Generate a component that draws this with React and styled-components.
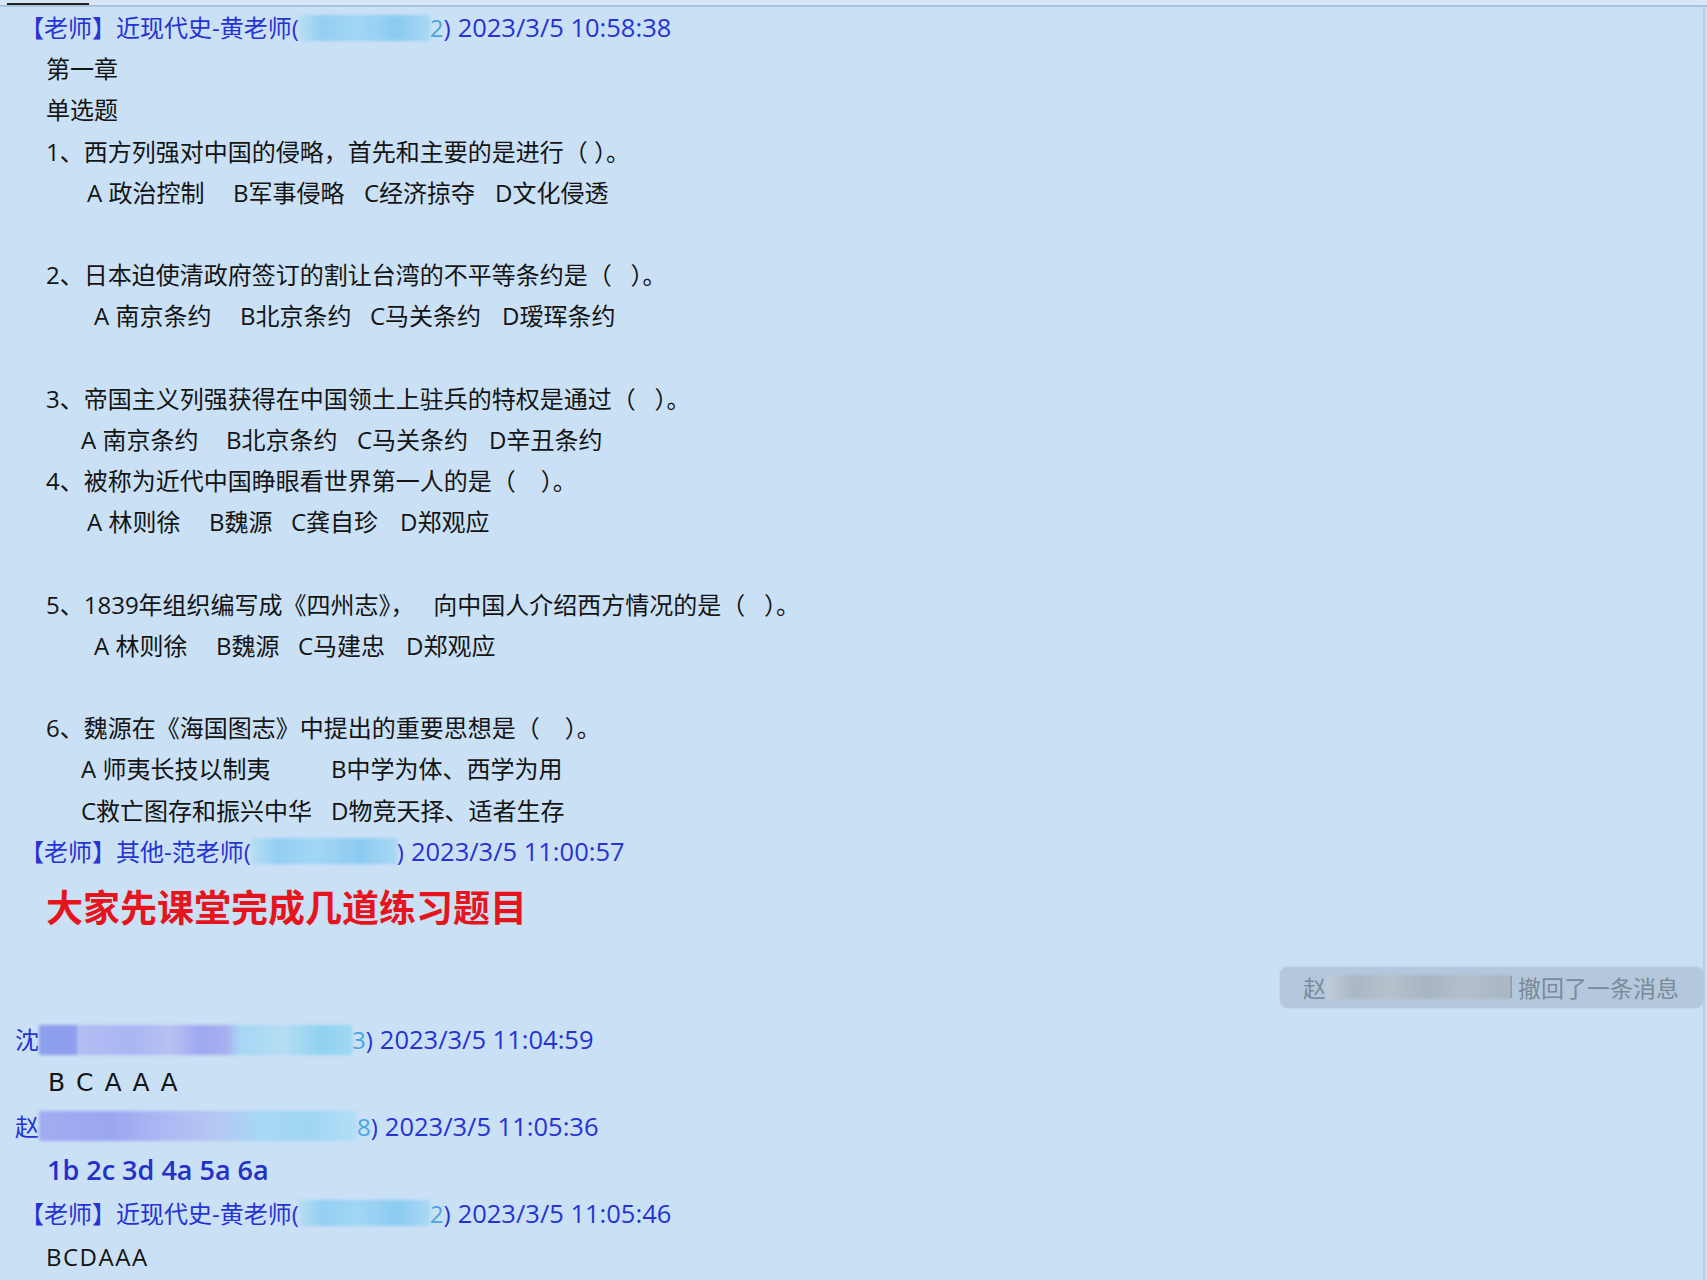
import React from "react";
import styled, { createGlobalStyle } from "styled-components";

const Global = createGlobalStyle`
  html, body { margin: 0; padding: 0; background: #c9e0f5; }
  body { font-family: "Open Sans", "Noto Sans CJK SC", sans-serif; }
`;

const Page = styled.div`
  width: 1707px;
  height: 1280px;
  background: #c9e0f5;
  display: flex;
  flex-direction: column;
  overflow: hidden;
  box-sizing: border-box;
  padding-right: 2px;
`;

const TopBar = styled.div`
  height: 5px;
  background: #d5e6f7;
  border-bottom: 2px solid #a9c2da;
  display: flex;
  align-items: flex-end;
  margin-right: -2px;
`;

const TabMark = styled.div`
  width: 82px;
  height: 2px;
  margin-left: 7px;
  background: #222;
`;

const Content = styled.div`
  flex: 1;
  display: flex;
  flex-direction: column;
  border-right: 2px solid #b6cde4;
  font-size: 24px;
  color: #141414;
`;

const Header = styled.div`
  height: ${(p) => p.$h || 41.2}px;
  line-height: ${(p) => p.$h || 41.2}px;
  padding-left: ${(p) => p.$pl ?? 20}px;
  color: #2633d2;
  white-space: pre;
  display: flex;
  align-items: center;
`;

const DateText = styled.span`
  font-size: 25.5px;
  margin-left: 7px;
`;

const Blur = styled.span`
  display: inline-block;
  width: ${(p) => p.$w}px;
  height: ${(p) => p.$h || 26}px;
  background: ${(p) => p.$bg};
  filter: blur(1.5px);
  border-radius: 2px;
`;

const Faint = styled.span`
  color: ${(p) => p.$c || "#48a6e2"};
`;

const Line = styled.div`
  height: ${(p) => p.$h || 41.2}px;
  line-height: ${(p) => p.$h || 41.2}px;
  padding-left: ${(p) => p.$pl ?? 46}px;
  letter-spacing: ${(p) => p.$ls || 0}px;
  white-space: pre;
`;

const Options = styled.div`
  height: 41.2px;
  line-height: 41.2px;
  padding-left: ${(p) => p.$pl}px;
  display: grid;
  grid-template-columns: ${(p) => p.$cols};
  white-space: pre;
`;

const Shout = styled.div`
  height: 68px;
  line-height: 68px;
  padding-left: 46px;
  font-family: "Noto Sans CJK SC", sans-serif;
  font-weight: 700;
  font-size: 37px;
  color: #e5141d;
`;

const RecallRow = styled.div`
  display: flex;
  justify-content: flex-end;
  margin-top: 27px;
  margin-bottom: 10px;
`;

const Pill = styled.div`
  height: 41px;
  display: flex;
  align-items: center;
  padding: 0 24px 0 23px;
  background: #b3c8dc;
  border-radius: 8px;
  font-family: "Noto Sans CJK SC", sans-serif;
  font-size: 23px;
  color: #7b8a99;
  box-shadow: 0 0 2px rgba(150, 170, 190, 0.5);
`;

const Bar = styled.span`
  display: inline-block;
  width: 2px;
  height: 22px;
  background: #8d9aa7;
  margin: 0 6px 0 0;
`;

const Mono = styled.div`
  height: 43.4px;
  line-height: 43.4px;
  padding-left: 48px;
  font-family: "DejaVu Sans", sans-serif;
  font-size: 25px;
  letter-spacing: 1.5px;
  white-space: pre;
  color: #141414;
`;

const Answers = styled.div`
  height: 43.4px;
  line-height: 43.4px;
  padding-left: 47px;
  font-family: "Open Sans", sans-serif;
  font-size: 27px;
  font-weight: 600;
  color: #2430c8;
  white-space: pre;
`;

const cyan =
  "linear-gradient(90deg, #b9ddf5 0%, #92cff2 18%, #a2d6f4 45%, #8bcbf1 75%, #a9d8f4 100%)";
const mosaic =
  "linear-gradient(90deg, #8f9ff0 0%, #8f9ff0 12%, #b3bdf3 12%, #aab6f2 30%, #b8c0f3 42%, #9ea8f0 52%, #a9b0f1 60%, #a6d6f3 64%, #b5ddf4 78%, #8fd2f0 90%, #9fd8f2 100%)";
const mosaic2 =
  "linear-gradient(90deg, #a2acf1 0%, #9aa6f0 22%, #a9b4f2 35%, #b6c6f3 55%, #a6d8f4 70%, #9fd6f3 85%, #b3def5 100%)";
const gray =
  "linear-gradient(90deg, #c2cdd8 0%, #aab7c4 15%, #b6c1cc 35%, #a7b4c1 55%, #b3bfca 75%, #a9b6c3 100%)";

const q1 = ["A 政治控制", "B军事侵略", "C经济掠夺", "D文化侵透"];
const q2 = ["A 南京条约", "B北京条约", "C马关条约", "D瑷珲条约"];
const q3 = ["A 南京条约", "B北京条约", "C马关条约", "D辛丑条约"];
const q4 = ["A 林则徐", "B魏源", "C龚自珍", "D郑观应"];
const q5 = ["A 林则徐", "B魏源", "C马建忠", "D郑观应"];

const Opts = ({ pl, cols, items }) => (
  <Options $pl={pl} $cols={cols}>
    {items.map((t) => (
      <span key={t}>{t}</span>
    ))}
  </Options>
);

export default function App() {
  return (
    <Page>
      <Global />
      <TopBar>
        <TabMark />
      </TopBar>
      <Content>
        <Header>
          【老师】近现代史-黄老师(
          <Blur $w={131} $bg={cyan} />
          <Faint>2</Faint>)<DateText>2023/3/5 10:58:38</DateText>
        </Header>
        <Line>第一章</Line>
        <Line>单选题</Line>
        <Line>1、西方列强对中国的侵略，首先和主要的是进行（ ）。</Line>
        <Opts pl={87} cols="146px 131px 131px auto" items={q1} />
        <Line> </Line>
        <Line>2、日本迫使清政府签订的割让台湾的不平等条约是（   ）。</Line>
        <Opts pl={94} cols="146px 130px 132px auto" items={q2} />
        <Line> </Line>
        <Line>3、帝国主义列强获得在中国领土上驻兵的特权是通过（   ）。</Line>
        <Opts pl={81} cols="145px 131px 132px auto" items={q3} />
        <Line>4、被称为近代中国睁眼看世界第一人的是（    ）。</Line>
        <Opts pl={87} cols="122px 82px 109px auto" items={q4} />
        <Line> </Line>
        <Line>5、1839年组织编写成《四州志》，   向中国人介绍西方情况的是（   ）。</Line>
        <Opts pl={94} cols="122px 82px 108px auto" items={q5} />
        <Line> </Line>
        <Line>6、魏源在《海国图志》中提出的重要思想是（    ）。</Line>
        <Opts pl={81} cols="250px auto" items={["A 师夷长技以制夷", "B中学为体、西学为用"]} />
        <Opts pl={81} cols="250px auto" items={["C救亡图存和振兴中华", "D物竞天择、适者生存"]} />

        <Header>
          【老师】其他-范老师(
          <Blur $w={146} $bg={cyan} />)<DateText>2023/3/5 11:00:57</DateText>
        </Header>
        <Shout>大家先课堂完成几道练习题目</Shout>
        <RecallRow>
          <Pill>
            赵
            <Blur $w={184} $h={24} $bg={gray} />
            <Bar />
            撤回了一条消息
          </Pill>
        </RecallRow>

        <Header $h={43.4} $pl={15}>
          沈
          <Blur $w={313} $h={30} $bg={mosaic} />
          <Faint>3</Faint>)<DateText>2023/3/5 11:04:59</DateText>
        </Header>
        <Mono>B C A A A</Mono>
        <Header $h={43.4} $pl={15}>
          赵
          <Blur $w={318} $h={30} $bg={mosaic2} />
          <Faint>8</Faint>)<DateText>2023/3/5 11:05:36</DateText>
        </Header>
        <Answers>1b 2c 3d 4a 5a 6a</Answers>
        <Header $h={43.4}>
          【老师】近现代史-黄老师(
          <Blur $w={131} $bg={cyan} />
          <Faint>2</Faint>)<DateText>2023/3/5 11:05:46</DateText>
        </Header>
        <Line $h={43.4} $ls={1.5}>BCDAAA</Line>
      </Content>
    </Page>
  );
}
